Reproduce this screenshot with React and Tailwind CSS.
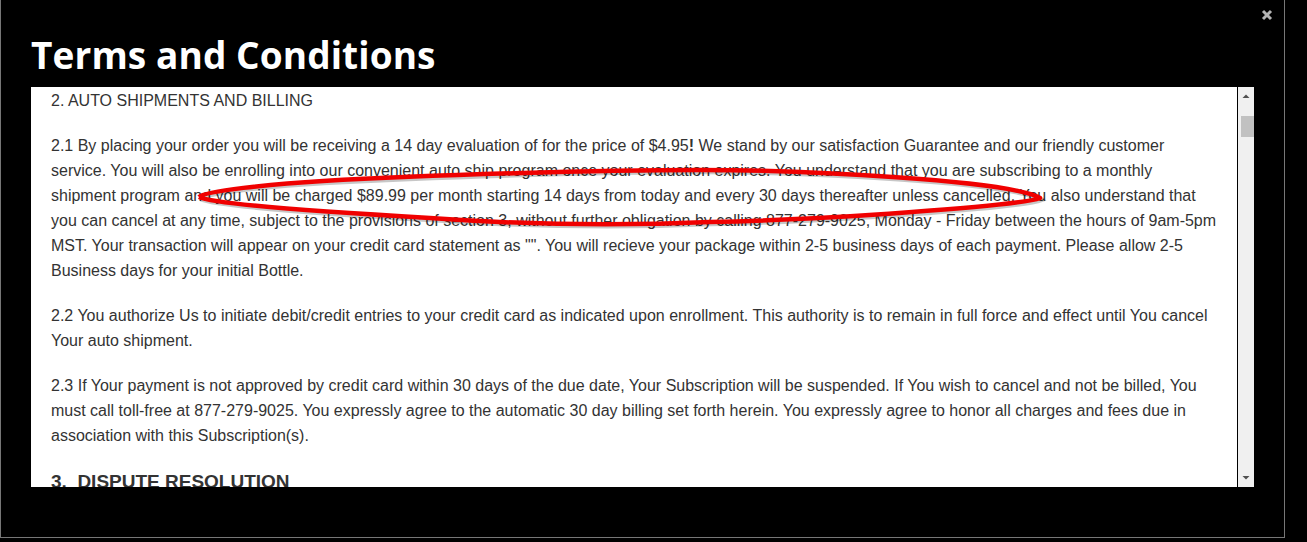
export default function App() {
  const body = { fontFamily: '"Liberation Sans", Arial, sans-serif' };
  const d =
    "M199 197 C205 191 270 184 323 181 C429 175 600 170 700 170 C800 170 1010 180 1040 198 C1020 206 820 220 710 222 C600 227 500 223 430 218 C360 214 215 205 199 197";
  return (
    <div className="relative w-[1307px] h-[542px] bg-black overflow-hidden">
      <div className="relative w-[1285px] h-[538px] border-l border-r border-b border-[#777777]">
        <button className="absolute top-[9px] right-[11px] w-[12px] h-[12px] flex items-center justify-center">
          <svg width="12" height="12" viewBox="0 0 12 12">
            <path d="M2 2 L10 10 M10 2 L2 10" stroke="#b4b4b4" strokeWidth="3" strokeLinecap="butt" />
          </svg>
        </button>
        <div className="pt-[36px] pl-[30px]">
          <h1
            className="text-white font-bold text-[37px] leading-none h-[36px] tracking-[0.1px]"
            style={{ fontFamily: '"Open Sans", sans-serif' }}
          >
            Terms and Conditions
          </h1>
          <div className="mt-[15px] flex h-[400px]">
            <div className="w-[1206px] h-full bg-white overflow-hidden pt-[1px] pl-5 pr-[19px] text-[16px] leading-[25px] text-[#333333]" style={body}>
              <p className="mb-5">2. AUTO SHIPMENTS AND BILLING</p>
              <p className="mb-5">
                2.1 By placing your order you will be receiving a 14 day evaluation of for the price of $4.95<b>!</b> We stand by our satisfaction Guarantee and our friendly customer service. You will also be enrolling into our convenient auto ship program once your evaluation expires. You understand that you are subscribing to a monthly shipment program and you will be charged $89.99 per month starting 14 days from today and every 30 days thereafter unless cancelled. You also understand that you can cancel at any time, subject to the provisions of section 3, without further obligation by calling 877-279-9025, Monday - Friday between the hours of 9am-5pm MST. Your transaction will appear on your credit card statement as "". You will recieve your package within 2-5 business days of each payment. Please allow 2-5 Business days for your initial Bottle.
              </p>
              <p className="mb-5">
                2.2 You authorize Us to initiate debit/credit entries to your credit card as indicated upon enrollment. This authority is to remain in full force and effect until You cancel Your auto shipment.
              </p>
              <p className="mb-5">
                2.3 If Your payment is not approved by credit card within 30 days of the due date, Your Subscription will be suspended. If You wish to cancel and not be billed, You must call toll-free at 877-279-9025. You expressly agree to the automatic 30 day billing set forth herein. You expressly agree to honor all charges and fees due in association with this Subscription(s).
              </p>
              <h3 className="mt-[21px] font-bold text-[19px] leading-[25px] text-[#333333]">3.&nbsp; DISPUTE RESOLUTION</h3>
            </div>
            <div className="ml-[1px] w-[16px] h-full bg-[#f0f0f0] flex flex-col items-center">
              <svg width="16" height="17" viewBox="0 0 16 17" className="shrink-0">
                <path d="M4.5 11 L8 7.5 L11.5 11 Z" fill="#505050" />
              </svg>
              <div className="mt-[12px] ml-[3px] w-[13px] h-[21px] bg-[#c1c1c1]" />
              <div className="flex-1" />
              <svg width="16" height="17" viewBox="0 0 16 17" className="shrink-0">
                <path d="M4.5 6 L8 9.5 L11.5 6 Z" fill="#505050" />
              </svg>
            </div>
          </div>
        </div>
      </div>
      <svg className="absolute top-0 left-0 pointer-events-none" width="1307" height="542" viewBox="0 0 1307 542">
        <path d={d} fill="none" stroke="rgba(0,0,0,0.22)" strokeWidth="4.5" transform="translate(1.5 2)" />
        <path d={d} fill="none" stroke="#f00000" strokeWidth="4.5" strokeLinejoin="round" />
      </svg>
    </div>
  );
}
